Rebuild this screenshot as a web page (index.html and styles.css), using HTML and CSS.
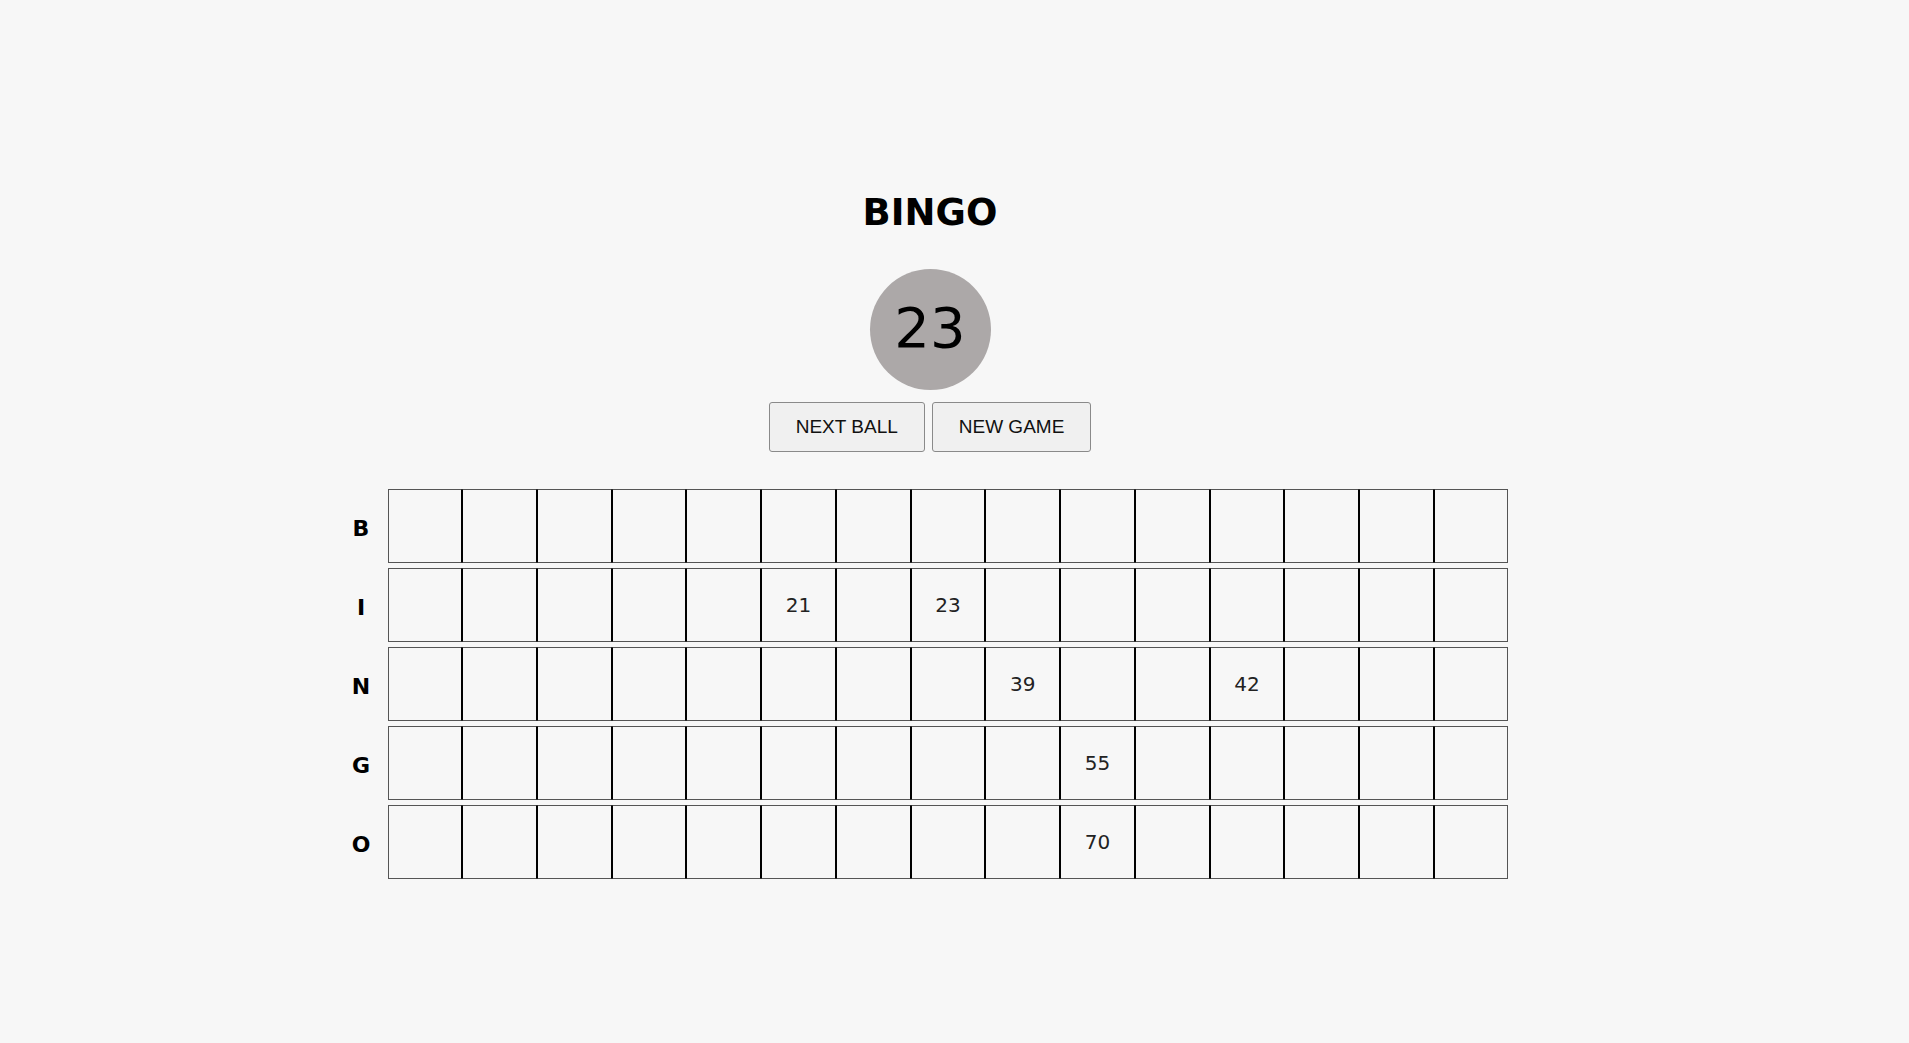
FILE: index.html
```html
<!DOCTYPE html>
<html lang="en">
<head>
<meta charset="utf-8">
<title>BINGO</title>
<link rel="stylesheet" href="styles.css">
</head>
<body>
<div class="app">
  <h1 class="title">BINGO</h1>
  <div class="ball"><span>23</span></div>
  <div class="controls">
    <button class="btn">NEXT BALL</button>
    <button class="btn">NEW GAME</button>
  </div>
  <div class="board">
    <div class="board-row">
      <div class="label">B</div>
      <div class="cells">
        <div class="cell"></div><div class="cell"></div><div class="cell"></div><div class="cell"></div><div class="cell"></div>
        <div class="cell"></div><div class="cell"></div><div class="cell"></div><div class="cell"></div><div class="cell"></div>
        <div class="cell"></div><div class="cell"></div><div class="cell"></div><div class="cell"></div><div class="cell"></div>
      </div>
    </div>
    <div class="board-row">
      <div class="label">I</div>
      <div class="cells">
        <div class="cell"></div><div class="cell"></div><div class="cell"></div><div class="cell"></div><div class="cell"></div>
        <div class="cell">21</div><div class="cell"></div><div class="cell">23</div><div class="cell"></div><div class="cell"></div>
        <div class="cell"></div><div class="cell"></div><div class="cell"></div><div class="cell"></div><div class="cell"></div>
      </div>
    </div>
    <div class="board-row">
      <div class="label">N</div>
      <div class="cells">
        <div class="cell"></div><div class="cell"></div><div class="cell"></div><div class="cell"></div><div class="cell"></div>
        <div class="cell"></div><div class="cell"></div><div class="cell"></div><div class="cell">39</div><div class="cell"></div>
        <div class="cell"></div><div class="cell">42</div><div class="cell"></div><div class="cell"></div><div class="cell"></div>
      </div>
    </div>
    <div class="board-row">
      <div class="label">G</div>
      <div class="cells">
        <div class="cell"></div><div class="cell"></div><div class="cell"></div><div class="cell"></div><div class="cell"></div>
        <div class="cell"></div><div class="cell"></div><div class="cell"></div><div class="cell"></div><div class="cell">55</div>
        <div class="cell"></div><div class="cell"></div><div class="cell"></div><div class="cell"></div><div class="cell"></div>
      </div>
    </div>
    <div class="board-row">
      <div class="label">O</div>
      <div class="cells">
        <div class="cell"></div><div class="cell"></div><div class="cell"></div><div class="cell"></div><div class="cell"></div>
        <div class="cell"></div><div class="cell"></div><div class="cell"></div><div class="cell"></div><div class="cell">70</div>
        <div class="cell"></div><div class="cell"></div><div class="cell"></div><div class="cell"></div><div class="cell"></div>
      </div>
    </div>
  </div>
</div>
</body>
</html>
```
FILE: styles.css
```css
html, body {
  margin: 0;
  padding: 0;
  background: #f7f7f7;
}

body {
  font-family: "DejaVu Sans", Verdana, sans-serif;
  color: #000;
}

.app {
  width: 1860px;
  display: flex;
  flex-direction: column;
  align-items: center;
  padding-top: 191px;
}

.title {
  margin: 0;
  font-size: 37px;
  line-height: 44px;
  font-weight: bold;
  color: #000;
}

.ball {
  margin-top: 34px;
  width: 121px;
  height: 121px;
  border-radius: 50%;
  background: #aca8a8;
  display: flex;
  align-items: center;
  justify-content: center;
  font-size: 56px;
  color: #000;
}

.ball span {
  padding-bottom: 4px;
}

.controls {
  margin-top: 12px;
  display: flex;
  gap: 7px;
}

.btn {
  font-family: "Liberation Sans", Arial, sans-serif;
  font-size: 19px;
  line-height: 22px;
  padding: 13px 26px;
  background: #f0f0f0;
  border: 1px solid #8a8a8a;
  border-radius: 3px;
  color: #111;
  margin: 0;
}

.board {
  margin-top: 37px;
  display: flex;
  flex-direction: column;
  gap: 5px;
}

.board-row {
  display: flex;
  align-items: center;
}

.label {
  width: 19px;
  padding-right: 17px;
  padding-top: 4px;
  text-align: center;
  font-size: 22px;
  font-weight: bold;
  color: #000;
}

.cells {
  width: 1121px;
  display: grid;
  grid-template-columns: repeat(15, 1fr);
}

.cell {
  box-sizing: border-box;
  height: 74px;
  border: 1px solid #000;
  border-top-color: #555;
  border-bottom-color: #555;
  display: flex;
  align-items: center;
  justify-content: center;
  font-size: 20px;
  color: #222;
}

.cell:first-child {
  border-left-color: #555;
}

.cell:last-child {
  border-right-color: #555;
}
```
